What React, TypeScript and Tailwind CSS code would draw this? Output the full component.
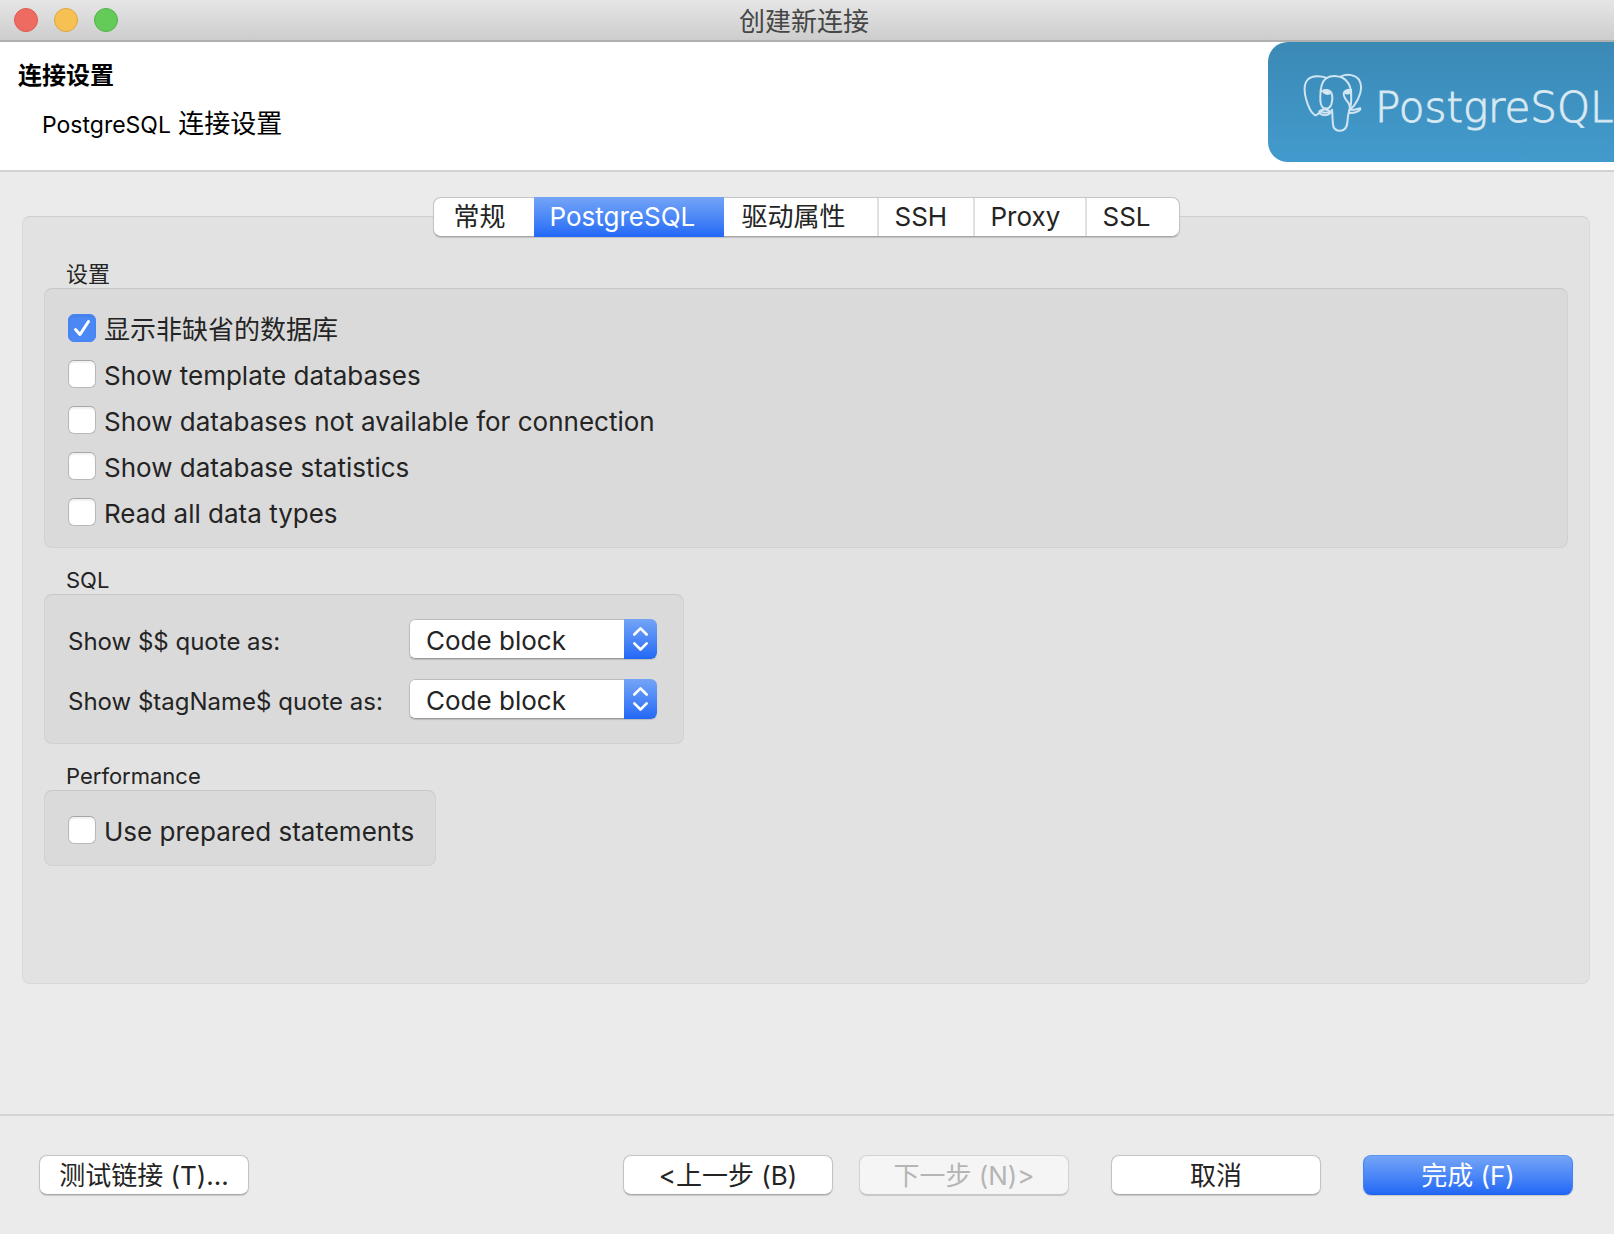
import React, { useState } from "react";

const FONT = "font-[Inter,'Noto_Sans_CJK_SC',sans-serif]";

const TABS = ["常规", "PostgreSQL", "驱动属性", "SSH", "Proxy", "SSL"];

const TAB_WIDTHS = ["w-[100px] pl-5", "w-[190px] pl-4", "w-[153px] pl-[18px]", "w-24 pl-4", "w-28 pl-4", "w-[94px] pl-4"];

const SETTINGS = [
  { label: "显示非缺省的数据库", on: true },
  { label: "Show template databases", on: false },
  { label: "Show databases not available for connection", on: false },
  { label: "Show database statistics", on: false },
  { label: "Read all data types", on: false },
];

function CheckRow({ label, on }: { label: string; on: boolean }) {
  const [checked, setChecked] = useState(on);
  return (
    <label className="flex h-7 items-center gap-2 text-[26px] leading-7 text-[#242424]">
      <span className="relative flex size-7 shrink-0">
        <input
          type="checkbox"
          checked={checked}
          onChange={(e) => setChecked(e.target.checked)}
          className="peer size-7 appearance-none rounded-md border border-[#b9b9b9] border-t-[#a6a6a6] bg-white shadow-[inset_0_2px_2px_rgba(0,0,0,0.06)] checked:border-[#4484f4] checked:bg-[#4b88f6]"
        />
        <svg
          viewBox="0 0 28 28"
          className="pointer-events-none absolute inset-0 size-7 opacity-0 peer-checked:opacity-100"
          fill="none"
          stroke="white"
          strokeWidth="3"
          strokeLinecap="round"
          strokeLinejoin="round"
        >
          <path d="M7.5 15.5 L12 20.5 L20.5 7.5" />
        </svg>
      </span>
      <span className="pt-1">{label}</span>
    </label>
  );
}

function Group({ title, className, children }: { title: string; className: string; children: React.ReactNode }) {
  return (
    <section aria-label={title} className="flex flex-col items-start">
      <h2 className="pt-0.5 pl-[22px] text-[22px] leading-7 text-[#242424]">{title}</h2>
      <div className={"rounded-lg border border-[#d1d1d1] border-t-[#c6c6c6] bg-[#dadada] " + className}>
        {children}
      </div>
    </section>
  );
}

function QuoteRow({ id, label }: { id: string; label: string }) {
  return (
    <div className="flex h-10 items-center">
      <label htmlFor={id} className="w-[341px] shrink-0 pt-1.5 text-2xl text-[#242424]">
        {label}
      </label>
      <div className="relative h-10 w-[248px] overflow-hidden rounded-md shadow-[0_1px_1px_rgba(0,0,0,0.15)]">
        <select
          id={id}
          className="h-10 w-full appearance-none rounded-md border border-[#bcbcbc] border-b-[#9c9c9c] bg-white pt-1 pl-4 text-[26px] leading-8 text-[#242424]"
        >
          <option>Code block</option>
          <option>String</option>
        </select>
        <span className="pointer-events-none absolute inset-y-0 right-0 flex w-[33px] items-center justify-center rounded-r-md bg-linear-to-b from-[#74a4f6] to-[#2268f6]">
          <svg
            width="33"
            height="40"
            viewBox="0 0 33 40"
            fill="none"
            stroke="white"
            strokeWidth="2.6"
            strokeLinecap="round"
            strokeLinejoin="round"
          >
            <path d="M10.3 15.5 L16.5 9.3 L22.7 15.5" />
            <path d="M10.3 24.3 L16.5 30.5 L22.7 24.3" />
          </svg>
        </span>
      </div>
    </div>
  );
}

function Elephant() {
  return (
    <svg
      viewBox="148 130 180 180"
      className="size-[60px]"
      fill="none"
      stroke="#d0e5f1"
      strokeWidth="6"
      strokeLinecap="round"
      strokeLinejoin="round"
    >
      <path d="M217 144 C200 138 176 137 163 149 C150 162 151 184 157 207 C163 229 174 250 183 256 C190 259 198 250 206 241" />
      <path d="M217 146 C203 158 200 178 200 200 C199 216 201 229 210 236" />
      <path d="M217 146 C234 136 262 137 276 151 C288 163 293 180 292 196" />
      <path d="M262 140 C282 131 306 136 316 150 C326 167 322 190 313 208 C306 222 298 233 291 237" />
      <path d="M205 184 C214 179 228 180 233 189 C238 201 236 214 233 224 C230 234 224 238 213 236" />
      <path d="M290 180 C280 180 271 184 270 192 C270 203 278 212 285 221 C289 228 290 236 287 243" />
      <path d="M292 180 C293 196 294 216 290 235" />
      <path d="M209 187 C214 182 226 182 231 189 C226 195 216 194 209 187 Z" fill="#e6f2f8" />
      <path d="M274 189 C277 183 286 180 291 182 C290 190 281 195 274 189 Z" fill="#e6f2f8" />
      <path d="M197 245 C206 237 222 238 232 247 C225 258 207 260 197 250" />
      <path d="M206 248 C214 250 222 249 230 246" />
      <path d="M235 240 C237 256 236 276 239 290 C242 304 260 305 269 301 C280 296 281 283 282 270 C283 258 284 248 288 241" />
      <path d="M288 240 C298 242 309 238 320 236 C321 243 306 250 288 250" />
    </svg>
  );
}

const BUTTON =
  "h-10 w-[210px] rounded-lg border pt-0.5 text-[26px] leading-9 shadow-[0_1px_1px_rgba(0,0,0,0.15)] ";
const PLAIN = BUTTON + "border-[#c4c4c4] border-b-[#a8a8a8] bg-white text-[#242424]";
const DISABLED = BUTTON + "border-[#d3d3d3] border-b-[#c6c6c6] bg-[#f5f5f5] text-[#b5b5b5]";
const PRIMARY =
  BUTTON + "border-[#4484ee] border-t-[#5d94ee] border-b-[#2062ee] bg-linear-to-b from-[#74a4f6] to-[#2268f6] text-white";

export default function App() {
  const [active, setActive] = useState(1);
  return (
    <div lang="zh-CN" className={"flex min-h-screen flex-col bg-[#ebebeb] " + FONT}>
      <header className="grid h-[42px] grid-cols-[1fr_auto_1fr] items-center border-b-2 border-[#b0b0b0] bg-linear-to-b from-[#e6e6e6] to-[#cdcdcd] pr-1.5">
        <div className="flex gap-4 pl-3.5">
          <button aria-label="关闭" className="size-6 rounded-full border border-[#dc5b50] bg-[#ed6b60]" />
          <button aria-label="最小化" className="size-6 rounded-full border border-[#dea63c] bg-[#f6c152]" />
          <button aria-label="缩放" className="size-6 rounded-full border border-[#53b348] bg-[#64ca58]" />
        </div>
        <span className="pt-1 text-[26px] leading-9 text-[#464646]">创建新连接</span>
        <span />
      </header>

      <div className="flex h-[130px] justify-between border-b-2 border-[#d3d3d3] bg-white text-black">
        <div className="pt-4">
          <h1 className="pl-[18px] text-2xl font-bold leading-9">连接设置</h1>
          <p className="pt-2.5 pl-[42px] text-[26px] leading-10">
            <span className="text-[23px]">PostgreSQL</span> 连接设置
          </p>
        </div>
        <div className="flex h-[120px] w-[346px] overflow-hidden rounded-l-[20px] bg-linear-to-b from-[#3b89b5] to-[#429bcd] pl-[35px]">
          <div className="shrink-0 pt-[31px]">
            <Elephant />
          </div>
          <span className="pt-10 pl-3 font-['DejaVu_Sans',sans-serif] text-[42px] font-extralight leading-[52px] text-[#e4f0f7] [-webkit-text-stroke:1px_#cfe4f0]">
            PostgreSQL
          </span>
        </div>
      </div>

      <main className="flex flex-1 flex-col pt-[25px] pr-6 pb-[130px] pl-[22px]">
        <div role="tablist" className="z-10 flex h-10 self-center rounded-lg border border-[#c4c4c4] border-b-[#a8a8a8] bg-white shadow-[0_1px_1px_rgba(0,0,0,0.15)]">
          {TABS.map((t, i) => (
            <button
              key={t}
              role="tab"
              aria-selected={i === active}
              onClick={() => setActive(i)}
              className={
                "text-left text-[26px] leading-9 " +
                TAB_WIDTHS[i] +
                (i === active
                  ? " -my-px h-10 bg-linear-to-b from-[#74a4f6] to-[#2268f6] text-white"
                  : " text-[#242424]") +
                (i > 2 ? " border-l-2 border-[#e0e0e0]" : "")
              }
            >
              {t}
            </button>
          ))}
        </div>

        <div
          role="tabpanel"
          className="-mt-[21px] flex flex-1 flex-col gap-4 rounded-lg border border-[#d9d9d9] border-t-[#cecece] bg-[#e2e2e2] px-[21px] pt-[41px]"
        >
          <Group title="设置" className="flex w-full flex-col gap-[18px] px-[23px] pt-[25px] pb-[21px]">
            {SETTINGS.map((s) => (
              <CheckRow key={s.label} {...s} />
            ))}
          </Group>
          <Group title="SQL" className="flex flex-col gap-5 py-6 pr-[26px] pl-[23px]">
            <QuoteRow id="dd-quote" label="Show $$ quote as:" />
            <QuoteRow id="tag-quote" label="Show $tagName$ quote as:" />
          </Group>
          <Group title="Performance" className="pt-[25px] pr-[21px] pb-[21px] pl-[23px]">
            <CheckRow label="Use prepared statements" on={false} />
          </Group>
        </div>
      </main>

      <footer className="flex h-[120px] items-start border-t-2 border-[#d3d3d3] pt-[39px] pr-[41px] pl-[39px]">
        <button className={PLAIN}>测试链接 (T)...</button>
        <div className="ml-auto flex gap-[42px]">
          <div className="flex gap-[26px]">
            <button className={PLAIN}>&lt;上一步 (B)</button>
            <button disabled className={DISABLED}>下一步 (N)&gt;</button>
          </div>
          <button className={PLAIN}>取消</button>
          <button className={PRIMARY}>完成 (F)</button>
        </div>
      </footer>
    </div>
  );
}
